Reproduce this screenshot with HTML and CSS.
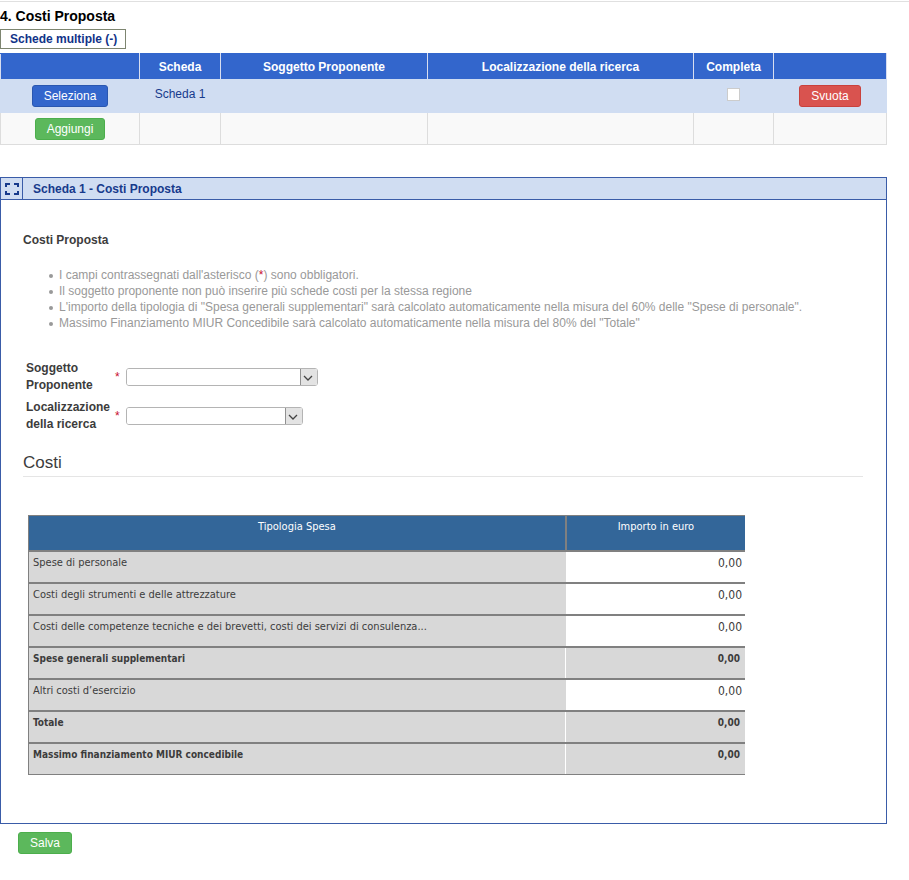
FILE: index.html
```
<!DOCTYPE html>
<html lang="it">
<head>
<meta charset="utf-8">
<title>Costi Proposta</title>
<link rel="stylesheet" href="styles.css">
</head>
<body>
<main class="page">
  <h1 class="page-title">4. Costi Proposta</h1>
  <button type="button" class="toggle">Schede multiple (-)</button>
  <table class="cards">
    <colgroup>
      <col class="c-action"><col class="c-card"><col class="c-subject"><col class="c-place"><col class="c-done"><col class="c-clear">
    </colgroup>
    <thead>
      <tr><th></th><th>Scheda</th><th>Soggetto Proponente</th><th>Localizzazione della ricerca</th><th>Completa</th><th></th></tr>
    </thead>
    <tbody>
      <tr class="selected">
        <td><button type="button" class="btn btn-blue">Seleziona</button></td>
        <td class="top">Scheda 1</td>
        <td></td>
        <td></td>
        <td class="top"><input type="checkbox" class="check" aria-label="Completa"></td>
        <td><button type="button" class="btn btn-red">Svuota</button></td>
      </tr>
      <tr>
        <td><button type="button" class="btn btn-green">Aggiungi</button></td>
        <td></td><td></td><td></td><td></td><td></td>
      </tr>
    </tbody>
  </table>

  <section class="panel">
    <header class="panel-head">
      <button type="button" class="expand" aria-label="Espandi">
        <svg width="14" height="14" viewBox="0 0 14 14" fill="none" stroke="#173a8c" stroke-width="2"><path d="M1 5V2H5M9 2H13V5M13 9V12H9M5 12H1V9"/></svg>
      </button>
      <h2 class="panel-title">Scheda 1 - Costi Proposta</h2>
    </header>
    <div class="panel-body">
      <h3 class="subtitle">Costi Proposta</h3>
      <ul class="notes">
        <li>I campi contrassegnati dall'asterisco (<span class="req">*</span>) sono obbligatori.</li>
        <li>Il soggetto proponente non può inserire più schede costi per la stessa regione</li>
        <li>L'importo della tipologia di "Spesa generali supplementari" sarà calcolato automaticamente nella misura del 60% delle "Spese di personale".</li>
        <li>Massimo Finanziamento MIUR Concedibile sarà calcolato automaticamente nella misura del 80% del "Totale"</li>
      </ul>
      <div class="fields">
        <label for="soggetto">Soggetto Proponente</label>
        <span class="star">*</span>
        <div class="select wide">
          <select id="soggetto"><option></option></select>
          <svg class="arrow" viewBox="0 0 17 17"><path d="M0 0H17V17H0Z" fill="#e3e3e3"/><path d="M.5 0V17" stroke="#909090"/><path d="M4 7L8 11L12 7" fill="none" stroke="#444" stroke-width="1.3"/></svg>
        </div>
        <label for="luogo">Localizzazione della ricerca</label>
        <span class="star">*</span>
        <div class="select">
          <select id="luogo"><option></option></select>
          <svg class="arrow" viewBox="0 0 17 17"><path d="M0 0H17V17H0Z" fill="#e3e3e3"/><path d="M.5 0V17" stroke="#909090"/><path d="M4 7L8 11L12 7" fill="none" stroke="#444" stroke-width="1.3"/></svg>
        </div>
      </div>
      <h3 class="legend">Costi</h3>
      <table class="costs">
        <colgroup><col class="c-type"><col class="c-amount"></colgroup>
        <thead><tr><th>Tipologia Spesa</th><th>Importo in euro</th></tr></thead>
        <tbody>
          <tr><td>Spese di personale</td><td>0,00</td></tr>
          <tr><td>Costi degli strumenti e delle attrezzature</td><td>0,00</td></tr>
          <tr><td>Costi delle competenze tecniche e dei brevetti, costi dei servizi di consulenza...</td><td>0,00</td></tr>
          <tr class="sum"><td>Spese generali supplementari</td><td>0,00</td></tr>
          <tr><td>Altri costi d’esercizio</td><td>0,00</td></tr>
          <tr class="sum"><td>Totale</td><td>0,00</td></tr>
          <tr class="sum"><td>Massimo finanziamento MIUR concedibile</td><td>0,00</td></tr>
        </tbody>
      </table>
    </div>
  </section>
  <button type="button" class="btn btn-green save">Salva</button>
</main>
</body>
</html>
```
FILE: styles.css
```
* { box-sizing: border-box; }
body {
  margin: 0;
  padding-top: 1px;
  background: #fff;
  color: #3c3c3c;
  font: 12px/16px "Liberation Sans", Arial, sans-serif;
}
h1, h2, h3, ul { margin: 0; padding: 0; }
button, select { font-family: inherit; margin: 0; }
.page { border-top: 1px solid #e0e0e0; }
.page-title {
  padding-top: 5px;
  font-size: 14px;
  line-height: 18px;
  color: #000;
}
.toggle {
  display: block;
  height: 20px;
  margin-top: 4px;
  padding: 0 8px 0 9px;
  border: 1px solid #7d8570;
  background: #fff;
  color: #113388;
  font-size: 12px;
  font-weight: bold;
}
.cards {
  width: calc(100% - 22px);
  margin-top: 4px;
  border-collapse: collapse;
  table-layout: fixed;
  text-align: center;
}
.c-action { width: 139px; }
.c-card { width: 81px; }
.c-subject { width: 207px; }
.c-done { width: 80px; }
.c-clear { width: 113px; }
.cards th {
  height: 26px;
  padding: 0;
  border: 1px solid #d8def0;
  border-top-color: #36c;
  border-bottom-color: #d0ddf2;
  background: #36c;
  color: #fff;
}
.cards td {
  height: 32px;
  padding: 0;
  border: 1px solid #ddd;
  background: #f9f9f9;
}
.cards .selected td {
  height: 33px;
  border-color: #d0ddf2;
  background: #d0ddf2;
  color: #173a8c;
}
.cards .top { padding-bottom: 4px; }
.check {
  appearance: none;
  display: block;
  width: 13px;
  height: 13px;
  margin: 0 auto;
  border: 1px solid #ccc;
  background: #fff;
}
.btn {
  height: 22px;
  padding: 0 11px;
  border: 1px solid;
  border-radius: 3px;
  color: #fff;
  font-size: 12px;
  line-height: 20px;
}
.btn-blue { background: #36c; border-color: #2a57b0; }
.btn-red { background: #d9534f; border-color: #c9413d; }
.btn-green { background: #5cb85c; border-color: #4cae4c; }
.panel {
  width: calc(100% - 22px);
  margin-top: 32px;
  border: 1px solid #3a5ca8;
}
.panel-head {
  display: flex;
  height: 22px;
  border-bottom: 1px solid #3a5ca8;
  background: #d0ddf2;
}
.expand {
  display: flex;
  align-items: center;
  justify-content: center;
  width: 22px;
  padding: 0;
  border: 0;
  border-right: 1px solid #3a5ca8;
  background: none;
}
.panel-title {
  padding-left: 10px;
  color: #173a8c;
  font-size: 12px;
  line-height: 22px;
}
.panel-body { padding: 32px 23px 48px 22px; }
.subtitle { font-size: 12px; line-height: 16px; }
.notes {
  margin-top: 19px;
  padding-left: 26px;
  color: #999;
  line-height: 16px;
  list-style: none;
}
.notes li {
  display: flex;
  white-space: pre-wrap;
}
.notes li::before {
  content: "";
  flex: none;
  width: 4px;
  height: 4px;
  margin: 7px 6px 0 0;
  border-radius: 50%;
  background: #999;
}
.req, .star { color: #c8102e; }
.fields {
  display: grid;
  grid-template-columns: 85px 7px 1fr;
  gap: 5px 4px;
  align-items: center;
  margin: 29px 0 0 3px;
}
.fields label { font-weight: bold; line-height: 17px; }
.select {
  position: relative;
  width: 177px;
  height: 18px;
  border: 1px solid #b4b4b4;
  border-radius: 3px;
  overflow: hidden;
}
.wide { width: 192px; }
.select select {
  appearance: none;
  display: block;
  width: 100%;
  height: 100%;
  padding: 0 18px 0 4px;
  border: 0;
  background: #fff;
}
.arrow {
  position: absolute;
  top: 0;
  right: 0;
  width: 17px;
  height: 17px;
  pointer-events: none;
}
.legend {
  margin-top: 19px;
  padding-bottom: 2px;
  border-bottom: 1px solid #e5e5e5;
  font-size: 17px;
  font-weight: normal;
  line-height: 22px;
}
.costs {
  width: 717px;
  max-width: 100%;
  margin: 38px 0 0 5px;
  border-collapse: collapse;
  table-layout: fixed;
  font: 11px/14px "DejaVu Sans Condensed", Tahoma, sans-serif;
}
.c-type { width: 75%; }
.costs th {
  height: 35px;
  padding: 4px;
  border: 2px solid #808080;
  border-width: 1px 0 2px 1px;
  background: #369;
  color: #fff;
  font-weight: normal;
  vertical-align: top;
}
.costs th + th { border-left-width: 2px; }
.costs td {
  height: 32px;
  padding: 4px;
  border-bottom: 2px solid #808080;
  background: #d8d8d8;
  vertical-align: top;
}
.costs td:first-child { border-left: 1px solid #808080; }
.costs td + td {
  padding-right: 3px;
  background: #fff;
  font-size: 12px;
  text-align: right;
}
.costs .sum td {
  background: #d8d8d8;
  font: bold 10px/14px "DejaVu Sans Condensed", Verdana, sans-serif;
}
.costs .sum td + td {
  padding-right: 5px;
  border-left: 1px solid #fff;
}
.costs tbody tr:last-child td { border-bottom-width: 1px; }
.save { display: block; margin: 8px 0 0 18px; }
```
